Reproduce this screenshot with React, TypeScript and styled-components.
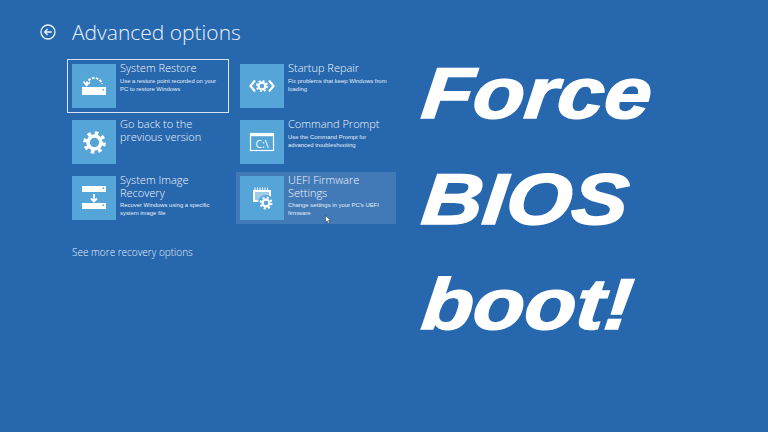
import React from 'react';
import styled, { createGlobalStyle } from 'styled-components';

const GlobalStyle = createGlobalStyle`
  html, body {
    margin: 0;
    padding: 0;
    background: #2767ae;
  }
`;

const Screen = styled.div`
  width: 768px;
  height: 432px;
  overflow: hidden;
  display: flex;
  background: #2767ae;
  color: #fff;
  font-family: "Open Sans", "Liberation Sans", sans-serif;
`;

const LeftPane = styled.div`
  width: 420px;
  flex: none;
  padding: 16px 0 0 40px;
  box-sizing: border-box;
`;

const Header = styled.div`
  display: flex;
  align-items: center;
  gap: 16px;
  height: 32px;
`;

const PageTitle = styled.h1`
  margin: 0;
  font-size: 21px;
  font-weight: 300;
  line-height: 32px;
  color: #eaf2f9;
`;

const OptionGrid = styled.div`
  display: grid;
  grid-template-columns: 160px 160px;
  grid-auto-rows: 52px;
  column-gap: 8px;
  row-gap: 4px;
  margin: 12px 0 0 28px;
`;

const Option = styled.div<{ $selected?: boolean; $hover?: boolean }>`
  position: relative;
  display: flex;
  gap: 4px;
  padding: 4px;
  box-sizing: border-box;
  background: ${p => (p.$hover ? 'rgba(255, 255, 255, 0.13)' : 'transparent')};
  outline: ${p => (p.$selected ? '1.5px solid #d5e5f3' : 'none')};
`;

const Tile = styled.div`
  width: 44px;
  height: 44px;
  flex: none;
  display: flex;
  align-items: center;
  justify-content: center;
  background: #55a5d9;
`;

const OptionText = styled.div`
  min-width: 0;
  margin-top: -2px;
`;

const OptionName = styled.div`
  font-size: 11px;
  font-weight: 300;
  line-height: 12.5px;
  color: #f0f5fa;
`;

const OptionDesc = styled.div`
  margin-top: 2px;
  font-family: "Liberation Sans", Arial, sans-serif;
  font-size: 5.9px;
  line-height: 8px;
  color: #e3edf6;
`;

const Cursor = styled.svg`
  position: absolute;
  left: 89px;
  top: 43px;
`;

const MoreLink = styled.div`
  margin: 21px 0 0 32px;
  font-size: 10px;
  font-weight: 300;
  line-height: 14px;
  color: #e3edf6;
`;

const BigPane = styled.div`
  flex: 1;
  padding-top: 41px;
`;

const BigLine = styled.div`
  height: 105.5px;
  font-family: "Liberation Sans", Arial, sans-serif;
  font-size: 72px;
  font-weight: 700;
  font-style: italic;
  line-height: 105.5px;
  color: #fff;
  transform: scaleX(1.17) skewX(-5deg);
  transform-origin: 0 72%;
  -webkit-text-stroke: 1.6px #fff;
`;

const BackIcon = () => (
  <svg width="16" height="16" viewBox="0 0 16 16" fill="none" stroke="#eef4fa" strokeWidth="1.3">
    <circle cx="8" cy="8" r="7" />
    <path d="M11.8 8H4.6M7.6 5L4.6 8l3 3" />
  </svg>
);

const RestoreIcon = () => (
  <svg width="34" height="34" viewBox="0 0 34 34" fill="none">
    <path d="M9.5 15a8 8 0 0 1 15.5 0" stroke="#fff" strokeWidth="2" strokeDasharray="2.6 1.4" />
    <path d="M6.5 12.5l3 4 3.5-3.5" stroke="#fff" strokeWidth="1.6" />
    <rect x="5" y="18" width="24" height="8" fill="#fff" />
    <rect x="25.5" y="20" width="1.5" height="1.5" fill="#55a5d9" />
  </svg>
);

const RepairIcon = () => (
  <svg width="34" height="34" viewBox="0 0 34 34" fill="none" stroke="#fff">
    <path d="M10 11.5L5.5 17l4.5 5.5M24 11.5l4.5 5.5-4.500 5.5" strokeWidth="2.2" />
    <circle cx="17" cy="17" r="3.4" strokeWidth="2.2" />
    <circle cx="17" cy="17" r="5.2" strokeWidth="1.8" strokeDasharray="2 2.08" />
  </svg>
);

const GearIcon = () => (
  <svg width="25" height="25" viewBox="0 0 28 28" fill="none" stroke="#fff">
    <circle cx="14" cy="14" r="7.2" strokeWidth="4" />
    <circle cx="14" cy="14" r="10.6" strokeWidth="4.2" strokeDasharray="4 4.32" />
  </svg>
);

const PromptIcon = () => (
  <svg width="36" height="36" viewBox="0 0 36 36" fill="none">
    <rect x="6.5" y="9.5" width="23" height="17" stroke="#fff" strokeWidth="1.2" />
    <rect x="6" y="9" width="24" height="3.2" fill="#fff" />
    <text x="18" y="23.5" textAnchor="middle" fontFamily="Open Sans, sans-serif" fontSize="10.5" fill="#fff">
      {'C:\\'}
    </text>
  </svg>
);

const ImageIcon = () => (
  <svg width="34" height="34" viewBox="0 0 34 34" fill="none">
    <rect x="5" y="5" width="24" height="6" fill="#fff" />
    <rect x="25.5" y="6.5" width="1.5" height="1.5" fill="#55a5d9" />
    <path d="M17 13v7.5M14 17.5l3 3 3-3" stroke="#fff" strokeWidth="1.8" />
    <rect x="5" y="22" width="24" height="6" fill="#fff" />
    <rect x="25.5" y="23.5" width="1.5" height="1.5" fill="#55a5d9" />
  </svg>
);

const FirmwareIcon = () => (
  <svg width="36" height="36" viewBox="0 0 36 36" fill="none">
    <path d="M11 7.5v3M13.5 7.5v3M16 7.5v3M18.5 7.5v3M21 7.5v3M23.5 7.5v3" stroke="#fff" strokeWidth="1" />
    <rect x="9" y="10" width="18" height="12" fill="#fff" />
    <rect x="11" y="12" width="14" height="8" fill="#9dcbe9" />
    <g transform="translate(15 16)">
      <circle cx="7" cy="7" r="8" fill="#55a5d9" />
      <circle cx="7" cy="7" r="3.4" stroke="#fff" strokeWidth="2.2" />
      <circle cx="7" cy="7" r="5.4" stroke="#fff" strokeWidth="2.2" strokeDasharray="2.1 2.14" />
    </g>
  </svg>
);

const options = [
  {
    name: 'System Restore',
    desc: 'Use a restore point recorded on your PC to restore Windows',
    icon: <RestoreIcon />,
    selected: true,
  },
  {
    name: 'Startup Repair',
    desc: 'Fix problems that keep Windows from loading',
    icon: <RepairIcon />,
  },
  {
    name: 'Go back to the previous version',
    icon: <GearIcon />,
  },
  {
    name: 'Command Prompt',
    desc: 'Use the Command Prompt for advanced troubleshooting',
    icon: <PromptIcon />,
  },
  {
    name: 'System Image Recovery',
    desc: 'Recover Windows using a specific system image file',
    icon: <ImageIcon />,
  },
  {
    name: 'UEFI Firmware Settings',
    desc: "Change settings in your PC's UEFI firmware",
    icon: <FirmwareIcon />,
    hover: true,
  },
];

const App: React.FC = () => (
  <Screen>
    <GlobalStyle />
    <LeftPane>
      <Header>
        <BackIcon />
        <PageTitle>Advanced options</PageTitle>
      </Header>
      <OptionGrid>
        {options.map(o => (
          <Option key={o.name} $selected={o.selected} $hover={o.hover}>
            <Tile>{o.icon}</Tile>
            <OptionText>
              <OptionName>{o.name}</OptionName>
              {o.desc && <OptionDesc>{o.desc}</OptionDesc>}
            </OptionText>
            {o.hover && (
              <Cursor width="6" height="9" viewBox="0 0 6 9">
                <path d="M0.5 0.5v7l1.8-1.6 1.2 2.6 1.2-.5-1.2-2.5h2.2z" fill="#fff" stroke="#1a2a3a" strokeWidth="0.5" />
              </Cursor>
            )}
          </Option>
        ))}
      </OptionGrid>
      <MoreLink>See more recovery options</MoreLink>
    </LeftPane>
    <BigPane>
      <BigLine>Force</BigLine>
      <BigLine>BIOS</BigLine>
      <BigLine>boot!</BigLine>
    </BigPane>
  </Screen>
);

export default App;
